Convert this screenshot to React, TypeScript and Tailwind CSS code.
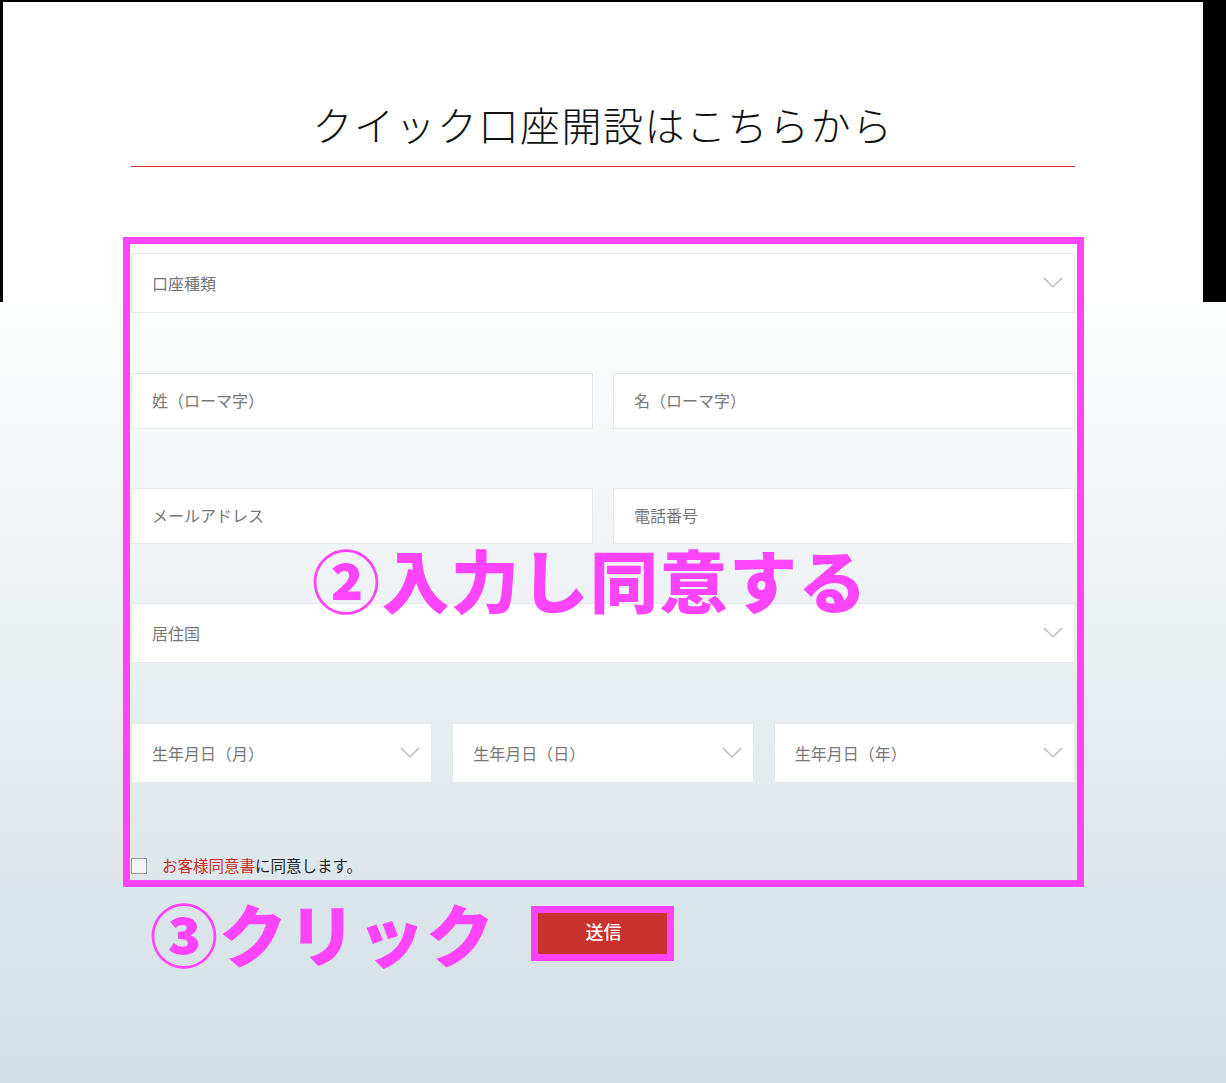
import React from "react";

const PINK = "border-[#fd44fb]";

const Chevron: React.FC = () => (
  <svg width="20" height="11" viewBox="0 0 20 11" className="shrink-0" aria-hidden="true">
    <polyline points="1,1 10,10 19,1" fill="none" stroke="#b4b4b4" strokeWidth="1.2" />
  </svg>
);

const SelectBox: React.FC<{ label: string }> = ({ label }) => (
  <div className="h-[60px] bg-white border border-[#e6e8ea] flex items-center justify-between pl-[20px] pr-[11px] pb-[1px] text-[16px] text-[#777]">
    <span>{label}</span>
    <Chevron />
  </div>
);

const InputBox: React.FC<{ label: string }> = ({ label }) => (
  <div className="h-[56px] bg-white border border-[#e6e8ea] flex items-center pl-[20px] pb-[3px] text-[16px] text-[#777]">
    {label}
  </div>
);

export default function App() {
  return (
    <div className="relative w-[1226px] h-[1083px] overflow-hidden font-['Noto_Sans_CJK_JP',sans-serif]">
      {/* header block */}
      <div className="h-[302px] bg-black pt-[2px] pl-[3px]">
        <div className="w-[1200px] h-[300px] bg-white pt-[102px]">
          <h1 className="text-center text-[40px] leading-none font-light tracking-[1.5px] text-[#111]">
            クイック口座開設はこちらから
          </h1>
          <div className="ml-[128px] mt-[22px] w-[944px] h-px bg-[#d3302c]" />
        </div>
      </div>

      {/* form area */}
      <div className="flow-root h-[781px] bg-gradient-to-b from-[#fdfefe] via-[#e8eef1] to-[#d1dfe4]">
        <div className={`relative -mt-[65px] ml-[123px] w-[961px] h-[650px] border-[7px] ${PINK} pl-[1px] pr-[2px] pt-[9px]`}>
          <SelectBox label="口座種類" />

          <div className="mt-[60px] grid grid-cols-2 gap-[20px]">
            <InputBox label="姓（ローマ字）" />
            <InputBox label="名（ローマ字）" />
          </div>

          <div className="mt-[59px] grid grid-cols-2 gap-[20px]">
            <InputBox label="メールアドレス" />
            <InputBox label="電話番号" />
          </div>

          <div className="mt-[59px]">
            <SelectBox label="居住国" />
          </div>

          <div className="mt-[60px] grid grid-cols-3 gap-[20px]">
            <SelectBox label="生年月日（月）" />
            <SelectBox label="生年月日（日）" />
            <SelectBox label="生年月日（年）" />
          </div>

          <div className="mt-[75px] flex items-center text-[15.5px] leading-none">
            <span className="w-[16px] h-[16px] border border-[#999] bg-[#f2f4f5] mr-[15px]" />
            <span className="text-[#c9302c]">お客様同意書</span>
            <span className="text-[#222]">に同意します。</span>
          </div>
        </div>

        {/* step 3 row */}
        <div className="mt-[12px] ml-[150px] flex items-center">
          <span className="w-[381px] text-[68px] leading-none font-black tracking-[1px] text-[#fd44fb] whitespace-nowrap">
            ③クリック
          </span>
          <div className={`border-[7px] ${PINK} w-[143px] h-[55px]`}>
            <button className="w-full h-full bg-[#c9332f] text-white text-[18px] font-medium flex items-center justify-center pl-[2px] pb-[3px]">
              送信
            </button>
          </div>
        </div>
      </div>

      {/* step 2 annotation over the form */}
      <span className="absolute left-[312px] top-[545px] text-[68px] leading-none font-black tracking-[1.5px] text-[#fd44fb] whitespace-nowrap">
        ②入力し同意する
      </span>
    </div>
  );
}
